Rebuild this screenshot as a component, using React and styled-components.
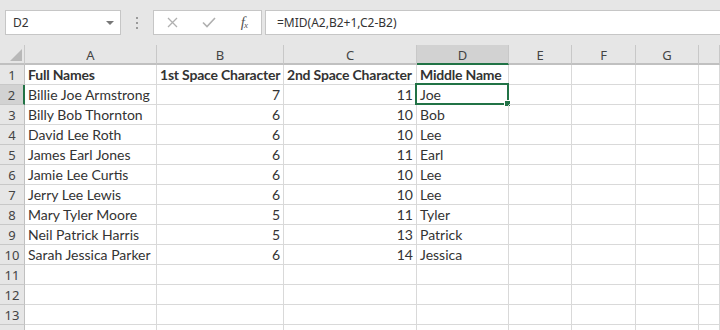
import React from "react";
import styled, { createGlobalStyle } from "styled-components";

const GlobalStyle = createGlobalStyle`
  html, body { margin: 0; padding: 0; background: #ffffff; }
  body { font-family: Lato, "Liberation Sans", sans-serif; overflow: hidden; }
`;

const Window = styled.div`
  width: 720px;
  height: 330px;
  display: flex;
  flex-direction: column;
  background: #ffffff;
  overflow: hidden;
`;

const FormulaBar = styled.div`
  flex: 0 0 45px;
  box-sizing: border-box;
  padding: 10px 0 0 5px;
  background: #e6e6e6;
  display: flex;
  align-items: flex-start;
`;

const Box = styled.div`
  height: 25px;
  box-sizing: border-box;
  background: #ffffff;
  border: 1px solid #c6c6c6;
  display: flex;
  align-items: center;
  font-family: "Noto Sans", "Open Sans", sans-serif;
  font-size: 12px;
  color: #333;
`;

const NameBox = styled(Box)`
  width: 116px;
  padding: 0 6px 0 7px;
  justify-content: space-between;
`;

const Caret = styled.span`
  width: 0;
  height: 0;
  border-left: 4px solid transparent;
  border-right: 4px solid transparent;
  border-top: 4px solid #777;
`;

const Grip = styled.div`
  width: 32px;
  height: 25px;
  display: flex;
  flex-direction: column;
  align-items: center;
  justify-content: center;
  gap: 3px;
`;

const GripDot = styled.span`
  width: 2px;
  height: 2px;
  background: #9a9a9a;
`;

const FxButtons = styled(Box)`
  width: 109px;
  padding: 0 14px 0 13px;
  justify-content: space-between;
`;

const Fx = styled.span`
  font-family: "Liberation Serif", serif;
  font-style: italic;
  font-size: 15px;
  color: #555;
  letter-spacing: -1px;
  sub { font-size: 9px; vertical-align: -1px; }
`;

const FormulaInput = styled(Box)`
  flex: 1;
  margin-left: 3px;
  padding-left: 11px;
  border-right: none;
`;

const Grid = styled.div`
  flex: 0 0 auto;
  display: grid;
  grid-template-columns: 25px 132px 127px 133px 92px 63px 64px 63px 1fr;
  grid-auto-rows: 20px;
  font-size: 14px;
  color: #333;
`;

const ColHead = styled.div`
  box-sizing: border-box;
  background: ${(p) => (p.$active ? "#d2d2d2" : "#e6e6e6")};
  border-right: 1px solid #c8c8c8;
  border-bottom: ${(p) => (p.$active ? "2px solid #217346" : "2px solid #c0c0c0")};
  display: flex;
  align-items: center;
  justify-content: center;
  font-family: "Noto Sans", "Open Sans", sans-serif;
  font-size: 13px;
  color: #444;
  padding-top: 1px;
`;

const Corner = styled(ColHead)`
  align-items: flex-end;
  justify-content: flex-end;
  padding: 0 2px 2px 0;
`;

const RowHead = styled.div`
  box-sizing: border-box;
  background: ${(p) => (p.$active ? "#d2d2d2" : "#e6e6e6")};
  border-bottom: 1px solid #c8c8c8;
  border-right: ${(p) => (p.$active ? "2px solid #217346" : "1px solid #c0c0c0")};
  display: flex;
  align-items: center;
  justify-content: center;
  font-family: "Noto Sans", "Open Sans", sans-serif;
  font-size: 13px;
  color: #444;
`;

const Cell = styled.div`
  position: relative;
  box-sizing: border-box;
  border-right: 1px solid #d9d9d9;
  border-bottom: 1px solid #d9d9d9;
  display: flex;
  align-items: center;
  justify-content: ${(p) => (p.$num ? "flex-end" : "flex-start")};
  padding: 0 3px;
  white-space: nowrap;
  font-weight: ${(p) => (p.$bold ? 700 : 400)};
  letter-spacing: ${(p) => (p.$bold ? "-0.2px" : "0")};
`;

const Selection = styled.span`
  position: absolute;
  left: -2px;
  top: -2px;
  right: -1px;
  bottom: -1px;
  border: 2px solid #217346;
  pointer-events: none;
`;

const FillHandle = styled.span`
  position: absolute;
  right: -4px;
  bottom: -4px;
  width: 5px;
  height: 5px;
  background: #217346;
  border: 1px solid #fff;
`;

const cols = ["A", "B", "C", "D", "E", "F", "G", ""];

const data = [
  ["Full Names", "1st Space Character", "2nd Space Character", "Middle Name"],
  ["Billie Joe Armstrong", 7, 11, "Joe"],
  ["Billy Bob Thornton", 6, 10, "Bob"],
  ["David Lee Roth", 6, 10, "Lee"],
  ["James Earl Jones", 6, 11, "Earl"],
  ["Jamie Lee Curtis", 6, 10, "Lee"],
  ["Jerry Lee Lewis", 6, 10, "Lee"],
  ["Mary Tyler Moore", 5, 11, "Tyler"],
  ["Neil Patrick Harris", 5, 13, "Patrick"],
  ["Sarah Jessica Parker", 6, 14, "Jessica"],
  [],
  [],
  [],
];

export default function App() {
  return (
    <Window>
      <GlobalStyle />
      <FormulaBar>
        <NameBox>
          <span>D2</span>
          <Caret />
        </NameBox>
        <Grip>
          <GripDot />
          <GripDot />
          <GripDot />
        </Grip>
        <FxButtons>
          <svg width="11" height="11" viewBox="0 0 11 11">
            <path d="M1 1 L10 10 M10 1 L1 10" stroke="#b0b0b0" strokeWidth="1.3" fill="none" />
          </svg>
          <svg width="14" height="11" viewBox="0 0 14 11">
            <path d="M1 5.5 L5 9.5 L13 1" stroke="#b0b0b0" strokeWidth="1.6" fill="none" />
          </svg>
          <Fx>
            f<sub>x</sub>
          </Fx>
        </FxButtons>
        <FormulaInput>=MID(A2,B2+1,C2-B2)</FormulaInput>
      </FormulaBar>
      <Grid>
        <Corner>
          <svg width="12" height="12" viewBox="0 0 12 12">
            <path d="M12 0 L12 12 L0 12 Z" fill="#b8b8b8" />
          </svg>
        </Corner>
        {cols.map((c, i) => (
          <ColHead key={i} $active={c === "D"}>
            {c}
          </ColHead>
        ))}
        {data.map((row, r) => (
          <React.Fragment key={r}>
            <RowHead $active={r === 1}>{r + 1}</RowHead>
            {cols.map((_, c) => {
              const v = row[c];
              const isNum = typeof v === "number";
              const sel = r === 1 && c === 3;
              return (
                <Cell key={c} $num={isNum} $bold={r === 0}>
                  {v}
                  {sel && (
                    <Selection>
                      <FillHandle />
                    </Selection>
                  )}
                </Cell>
              );
            })}
          </React.Fragment>
        ))}
        <RowHead />
        {cols.map((_, c) => (
          <Cell key={"x" + c} />
        ))}
      </Grid>
    </Window>
  );
}
